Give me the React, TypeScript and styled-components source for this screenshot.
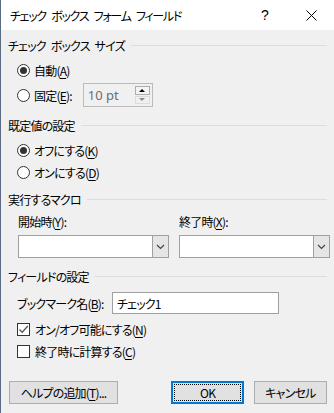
import React from 'react';
import styled, {createGlobalStyle} from "styled-components";

const GlobalStyle = createGlobalStyle`
  html, body {
    margin: 0;
    padding: 0;
    background: #f0f0f0;
  }
  body {
    font-family: "Noto Sans CJK JP", "Noto Sans", sans-serif;
    font-size: 12px;
    font-feature-settings: "palt";
    letter-spacing: -0.8px;
    word-spacing: 3px;
    color: #000;
  }
`

const Window = styled.div`
  width: 334px;
  height: 413px;
  box-sizing: border-box;
  border-left: 1px solid #5a6a80;
  background: #f0f0f0;
  overflow: hidden;
`

const TitleBar = styled.div`
  height: 30px;
  background: #fff;
  display: flex;
  align-items: center;
  padding-left: 9px;
`

const TitleText = styled.div`
  flex: 1;
  font-size: 12px;
  letter-spacing: -1.3px;
  word-spacing: 4px;
  white-space: pre;
`

const TitleButton = styled.div`
  width: 46px;
  display: flex;
  justify-content: center;
  align-items: center;
  font-family: "Liberation Sans", sans-serif;
  font-size: 14px;
  letter-spacing: 0;
`

const Body = styled.div`
  padding: 0 7px 0 7px;
`

const GroupHeader = styled.div<{ $mt: number }>`
  display: flex;
  align-items: center;
  height: 16px;
  margin-top: ${p => p.$mt}px;
  gap: 6px;
  white-space: pre;

  &::after {
    content: "";
    flex: 1;
    height: 1px;
    background: #dcdcdc;
  }
`

const Row = styled.div<{ $mt: number; $h?: number }>`
  display: flex;
  align-items: center;
  height: ${p => p.$h ?? 20}px;
  margin-top: ${p => p.$mt}px;
  padding-left: 9px;
`

const Label = styled.span`
  white-space: nowrap;
  flex-shrink: 0;
`

const Radio = styled.span<{ $checked?: boolean }>`
  width: 11px;
  height: 11px;
  border: 1px solid #333;
  border-radius: 50%;
  background: #fff;
  margin-right: 4px;
  display: flex;
  align-items: center;
  justify-content: center;
  flex-shrink: 0;

  &::after {
    content: "";
    display: ${p => p.$checked ? "block" : "none"};
    width: 7px;
    height: 7px;
    border-radius: 50%;
    background: #333;
  }
`

const CheckBox = styled.span`
  width: 11px;
  height: 11px;
  border: 1px solid #333;
  background: #fff;
  margin-right: 5px;
  display: flex;
  align-items: center;
  justify-content: center;
  flex-shrink: 0;
`

const Key = styled.span`
  text-decoration: underline;
  text-underline-offset: 2px;
`

const Spinner = styled.div`
  width: 70px;
  height: 24px;
  box-sizing: border-box;
  border: 1px solid #bcbcbc;
  margin-left: 11px;
  display: flex;
  align-items: center;
  padding-left: 4px;
  color: #6d6d6d;
  font-family: "Noto Sans", sans-serif;
  font-size: 13px;
  letter-spacing: 0;
  word-spacing: 0;
`

const SpinValue = styled.span`
  flex: 1;
`

const SpinButtons = styled.div`
  width: 15px;
  height: 18px;
  margin-right: 2px;
  display: flex;
  flex-direction: column;
  gap: 1px;
`

const SpinButton = styled.div<{ $up?: boolean }>`
  flex: 1;
  box-sizing: border-box;
  border: 1px solid ${p => p.$up ? "#adadad" : "#dcdcdc"};
  background: ${p => p.$up ? "#f4f4f4" : "#f0f0f0"};
  display: flex;
  align-items: center;
  justify-content: center;

  &::after {
    content: "";
    border-left: 3px solid transparent;
    border-right: 3px solid transparent;
    ${p => p.$up ? "border-bottom: 3px solid #000;" : "border-top: 3px solid #8a8a8a;"}
  }
`

const MacroGrid = styled.div`
  display: grid;
  grid-template-columns: 151px 151px;
  column-gap: 10px;
  padding-left: 10px;
  margin-top: 7px;
`

const FieldLabel = styled.div`
  height: 16px;
  line-height: 16px;
  margin-bottom: 5px;
`

const Combo = styled.div`
  height: 23px;
  box-sizing: border-box;
  border: 1px solid #a0a0a0;
  background: #fff;
  display: flex;
  justify-content: flex-end;
`

const ComboButton = styled.div`
  width: 16px;
  box-sizing: border-box;
  border-left: 1px solid #a0a0a0;
  background: #e5e5e5;
  display: flex;
  align-items: center;
  justify-content: center;
`

const TextInput = styled.div`
  width: 167px;
  height: 22px;
  box-sizing: border-box;
  border: 1px solid #a0a0a0;
  background: #fff;
  margin-left: auto;
  margin-right: 48px;
  display: flex;
  align-items: center;
  padding-left: 4px;
`

const ButtonBar = styled.div`
  display: flex;
  align-items: center;
  margin-top: 20px;
  padding-left: 1px;
`

const Button = styled.div<{ $w: number; $default?: boolean }>`
  width: ${p => p.$w}px;
  height: 23px;
  box-sizing: border-box;
  border: ${p => p.$default ? "2px solid #0078d7" : "1px solid #adadad"};
  background: #e1e1e1;
  display: flex;
  align-items: center;
  justify-content: center;
  position: relative;
  white-space: nowrap;
`

const FocusRing = styled.span`
  position: absolute;
  inset: 1px;
  border: 1px dotted #000;
`

const Spacer = styled.div<{ $w: number }>`
  width: ${p => p.$w}px;
`

const Chevron = () => (
    <svg width="9" height="6" viewBox="0 0 9 6">
        <path d="M1 1 L4.5 4.5 L8 1" fill="none" stroke="#444" strokeWidth="1.2"/>
    </svg>
)

const Check = () => (
    <svg width="11" height="11" viewBox="0 0 11 11">
        <path d="M1.5 5.5 L4.2 8.3 L9.8 2" fill="none" stroke="#555" strokeWidth="1.3"/>
    </svg>
)

const CloseIcon = () => (
    <svg width="11" height="11" viewBox="0 0 11 11">
        <path d="M0.5 0.5 L10.5 10.5 M10.5 0.5 L0.5 10.5" stroke="#000" strokeWidth="1"/>
    </svg>
)

export default function App() {
    return (
        <Window>
            <GlobalStyle/>
            <TitleBar>
                <TitleText>チェック ボックス フォーム フィールド</TitleText>
                <TitleButton>?</TitleButton>
                <TitleButton><CloseIcon/></TitleButton>
            </TitleBar>
            <Body>
                <GroupHeader $mt={7}>チェック ボックス サイズ</GroupHeader>
                <Row $mt={7}><Radio $checked/><Label>自動(<Key>A</Key>)</Label></Row>
                <Row $mt={3} $h={24}>
                    <Radio/><Label>固定(<Key>E</Key>):</Label>
                    <Spinner>
                        <SpinValue>10 pt</SpinValue>
                        <SpinButtons>
                            <SpinButton $up/>
                            <SpinButton/>
                        </SpinButtons>
                    </Spinner>
                </Row>

                <GroupHeader $mt={10}>既定値の設定</GroupHeader>
                <Row $mt={7}><Radio $checked/><Label>オフにする(<Key>K</Key>)</Label></Row>
                <Row $mt={2}><Radio/><Label>オンにする(<Key>D</Key>)</Label></Row>

                <GroupHeader $mt={9}>実行するマクロ</GroupHeader>
                <MacroGrid>
                    <div>
                        <FieldLabel>開始時(<Key>Y</Key>):</FieldLabel>
                        <Combo><ComboButton><Chevron/></ComboButton></Combo>
                    </div>
                    <div>
                        <FieldLabel>終了時(<Key>X</Key>):</FieldLabel>
                        <Combo><ComboButton><Chevron/></ComboButton></Combo>
                    </div>
                </MacroGrid>

                <GroupHeader $mt={10}>フィールドの設定</GroupHeader>
                <Row $mt={8} $h={22}>
                    <Label>ブックマーク名(<Key>B</Key>):</Label>
                    <TextInput>チェック1</TextInput>
                </Row>
                <Row $mt={5}><CheckBox><Check/></CheckBox><Label>オン/オフ可能にする(<Key>N</Key>)</Label></Row>
                <Row $mt={2}><CheckBox/><Label>終了時に計算する(<Key>C</Key>)</Label></Row>

                <ButtonBar>
                    <Button $w={110}>ヘルプの追加(<Key>T</Key>)...</Button>
                    <Spacer $w={54}/>
                    <Button $w={73} $default><FocusRing/>OK</Button>
                    <Spacer $w={10}/>
                    <Button $w={74}>キャンセル</Button>
                </ButtonBar>
            </Body>
        </Window>
    );
}
